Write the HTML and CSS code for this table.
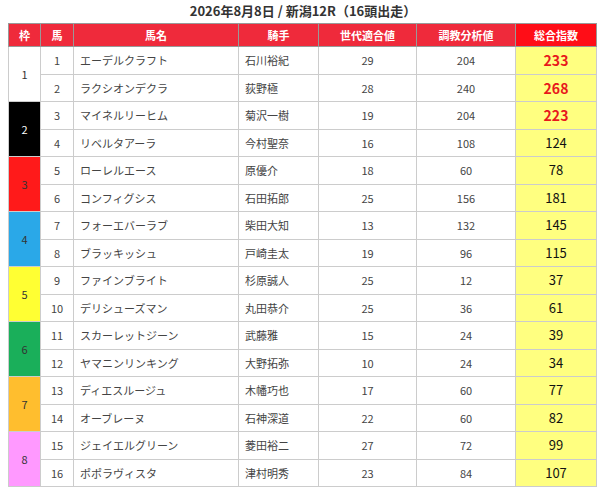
FILE: index.html
```html
<!DOCTYPE html>
<html lang="ja">
<head>
<meta charset="utf-8">
<link rel="stylesheet" href="styles.css">
</head>
<body>
<div class="wrap">
<h1 class="title">2026年8月8日 / 新潟12R（16頭出走）</h1>
<table class="race">
<colgroup>
<col class="c-waku"><col class="c-uma"><col class="c-name"><col class="c-jockey"><col class="c-gen"><col class="c-train"><col class="c-total">
</colgroup>
<thead>
<tr><th>枠</th><th>馬</th><th>馬名</th><th>騎手</th><th>世代適合値</th><th>調教分析値</th><th class="th-total">総合指数</th></tr>
</thead>
<tbody>
<tr><td class="waku w1" rowspan="2">1</td><td class="num">1</td><td class="txt">エーデルクラフト</td><td class="txt">石川裕紀</td><td class="num">29</td><td class="num">204</td><td class="total top">233</td></tr>
<tr><td class="num">2</td><td class="txt">ラクシオンデクラ</td><td class="txt">荻野極</td><td class="num">28</td><td class="num">240</td><td class="total top">268</td></tr>
<tr><td class="waku w2" rowspan="2">2</td><td class="num">3</td><td class="txt">マイネルリーヒム</td><td class="txt">菊沢一樹</td><td class="num">19</td><td class="num">204</td><td class="total top">223</td></tr>
<tr><td class="num">4</td><td class="txt">リベルタアーラ</td><td class="txt">今村聖奈</td><td class="num">16</td><td class="num">108</td><td class="total">124</td></tr>
<tr><td class="waku w3" rowspan="2">3</td><td class="num">5</td><td class="txt">ローレルエース</td><td class="txt">原優介</td><td class="num">18</td><td class="num">60</td><td class="total">78</td></tr>
<tr><td class="num">6</td><td class="txt">コンフィグシス</td><td class="txt">石田拓郎</td><td class="num">25</td><td class="num">156</td><td class="total">181</td></tr>
<tr><td class="waku w4" rowspan="2">4</td><td class="num">7</td><td class="txt">フォーエバーラブ</td><td class="txt">柴田大知</td><td class="num">13</td><td class="num">132</td><td class="total">145</td></tr>
<tr><td class="num">8</td><td class="txt">ブラッキッシュ</td><td class="txt">戸崎圭太</td><td class="num">19</td><td class="num">96</td><td class="total">115</td></tr>
<tr><td class="waku w5" rowspan="2">5</td><td class="num">9</td><td class="txt">ファインブライト</td><td class="txt">杉原誠人</td><td class="num">25</td><td class="num">12</td><td class="total">37</td></tr>
<tr><td class="num">10</td><td class="txt">デリシューズマン</td><td class="txt">丸田恭介</td><td class="num">25</td><td class="num">36</td><td class="total">61</td></tr>
<tr><td class="waku w6" rowspan="2">6</td><td class="num">11</td><td class="txt">スカーレットジーン</td><td class="txt">武藤雅</td><td class="num">15</td><td class="num">24</td><td class="total">39</td></tr>
<tr><td class="num">12</td><td class="txt">ヤマニンリンキング</td><td class="txt">大野拓弥</td><td class="num">10</td><td class="num">24</td><td class="total">34</td></tr>
<tr><td class="waku w7" rowspan="2">7</td><td class="num">13</td><td class="txt">ディエスルージュ</td><td class="txt">木幡巧也</td><td class="num">17</td><td class="num">60</td><td class="total">77</td></tr>
<tr><td class="num">14</td><td class="txt">オーブレーヌ</td><td class="txt">石神深道</td><td class="num">22</td><td class="num">60</td><td class="total">82</td></tr>
<tr><td class="waku w8" rowspan="2">8</td><td class="num">15</td><td class="txt">ジェイエルグリーン</td><td class="txt">菱田裕二</td><td class="num">27</td><td class="num">72</td><td class="total">99</td></tr>
<tr><td class="num">16</td><td class="txt">ポポラヴィスタ</td><td class="txt">津村明秀</td><td class="num">23</td><td class="num">84</td><td class="total">107</td></tr>
</tbody>
</table>
</div>
</body>
</html>
```

FILE: styles.css
```css
html, body {
  margin: 0;
  padding: 0;
  background: #fff;
}
body {
  font-family: "Noto Sans CJK JP", "Noto Sans", sans-serif;
  color: #444;
}
.wrap {
  padding: 0 8px;
}
.title {
  margin: 0;
  height: 23px;
  line-height: 22px;
  font-size: 13px;
  font-weight: bold;
  color: #333;
  text-align: center;
}
.race {
  width: 588px;
  border-collapse: collapse;
  table-layout: fixed;
  font-size: 11px;
}
.c-waku { width: 32px; }
.c-uma { width: 33px; }
.c-name { width: 165px; }
.c-jockey { width: 80px; }
.c-gen { width: 98px; }
.c-train { width: 99px; }
.c-total { width: 81px; }
.race th {
  background: #ef2a3b;
  color: #fff;
  font-weight: bold;
  height: 22px;
  padding: 0;
  border: 1px solid #999;
  text-align: center;
  line-height: 14px;
}
.race th.th-total {
  background: #ff0d17;
}
.race td {
  height: 26.5px;
  padding: 0;
  border: 1px solid #ccc;
  line-height: 14px;
}
.race td.num {
  text-align: center;
}
.race td.txt {
  text-align: left;
  padding-left: 6px;
}
.race td.waku {
  text-align: center;
  color: #333;
}
.w1 { background: #fff; }
.race td.w2 { background: #000; color: #fff; }
.w3 { background: #ff1a1a; }
.w4 { background: #2aa8e8; }
.w5 { background: #ffff33; }
.w6 { background: #1aaf5a; }
.w7 { background: #ffbe2e; }
.w8 { background: #ff99ff; }
.race td.total {
  background: #ffff80;
  text-align: center;
  color: #111;
  font-size: 13px;
}
.race td.total.top {
  color: #e8181c;
  font-weight: bold;
  font-size: 14px;
}
```
